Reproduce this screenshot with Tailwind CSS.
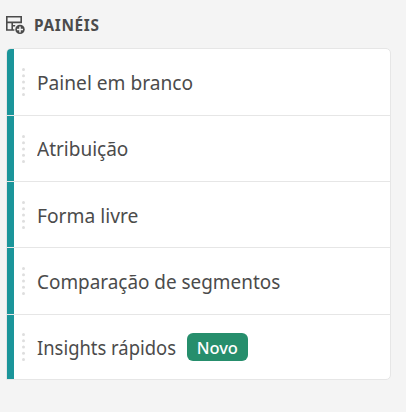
<!DOCTYPE html>
<html lang="pt">
<head>
<meta charset="utf-8">
<title>Painéis</title>
<script src="https://cdn.jsdelivr.net/npm/@tailwindcss/browser@4"></script>
</head>
<body class="h-screen overflow-hidden bg-[#f4f4f4] pl-[6px] font-['Noto_Sans',sans-serif] text-[#4b4b4b]">
<header class="flex h-12 items-center pt-[2px]">
<svg class="h-5 w-5 shrink-0" viewBox="0 0 20 20" fill="none" stroke="#4b4b4b" stroke-width="1.6">
<path d="M15.2 8.2V1.8H.8v13.2h7.6M.8 7.4h14.4M6.2 7.4V15M6.2 10.8h3"/>
<circle cx="14" cy="14.4" r="4.7" fill="#4b4b4b" stroke="none"/>
<path d="M14 11.4v6M11 14.4h6" stroke="#f4f4f4" stroke-width="1.5"/>
</svg>
<h1 class="ml-2 origin-left scale-x-[.96] text-[16px] leading-6 font-bold tracking-[.7px] whitespace-nowrap">PAINÉIS</h1>
</header>
<ul class="grid h-[332px] w-[385px] grid-rows-[67px_66px_66px_67px_1fr] overflow-hidden rounded-[5px] rounded-bl-none border border-[#e6e6e6] bg-white text-[20px] whitespace-nowrap">
<li class="flex items-center border-b border-[#e6e6e6]"><i class="h-full w-[7px] bg-[#1b959a]"></i><svg class="mx-2 h-7 w-[3px]" fill="#dedede"><circle cx="1.5" cy="1.5" r="1.5"/><circle cx="1.5" cy="7.7" r="1.5"/><circle cx="1.5" cy="14" r="1.5"/><circle cx="1.5" cy="20.2" r="1.5"/><circle cx="1.5" cy="26.5" r="1.5"/></svg><span class="ml-[4px] origin-left scale-x-[.957] pt-[2px]">Painel em branco</span></li>
<li class="flex items-center border-b border-[#e6e6e6]"><i class="h-full w-[7px] bg-[#1b959a]"></i><svg class="mx-2 h-7 w-[3px]" fill="#dedede"><circle cx="1.5" cy="1.5" r="1.5"/><circle cx="1.5" cy="7.7" r="1.5"/><circle cx="1.5" cy="14" r="1.5"/><circle cx="1.5" cy="20.2" r="1.5"/><circle cx="1.5" cy="26.5" r="1.5"/></svg><span class="ml-[4px] origin-left scale-x-[.95]">Atribuição</span></li>
<li class="flex items-center border-b border-[#e6e6e6]"><i class="h-full w-[7px] bg-[#1b959a]"></i><svg class="mx-2 h-7 w-[3px]" fill="#dedede"><circle cx="1.5" cy="1.5" r="1.5"/><circle cx="1.5" cy="7.7" r="1.5"/><circle cx="1.5" cy="14" r="1.5"/><circle cx="1.5" cy="20.2" r="1.5"/><circle cx="1.5" cy="26.5" r="1.5"/></svg><span class="ml-[4px] origin-left scale-x-[.96] pt-[2px]">Forma livre</span></li>
<li class="flex items-center border-b border-[#e6e6e6]"><i class="h-full w-[7px] bg-[#1b959a]"></i><svg class="mx-2 h-7 w-[3px]" fill="#dedede"><circle cx="1.5" cy="1.5" r="1.5"/><circle cx="1.5" cy="7.7" r="1.5"/><circle cx="1.5" cy="14" r="1.5"/><circle cx="1.5" cy="20.2" r="1.5"/><circle cx="1.5" cy="26.5" r="1.5"/></svg><span class="ml-[4px] origin-left scale-x-[.945] pt-[2px]">Comparação de segmentos</span></li>
<li class="flex items-center"><i class="h-full w-[7px] bg-[#1b959a]"></i><svg class="mx-2 h-7 w-[3px]" fill="#dedede"><circle cx="1.5" cy="1.5" r="1.5"/><circle cx="1.5" cy="7.7" r="1.5"/><circle cx="1.5" cy="14" r="1.5"/><circle cx="1.5" cy="20.2" r="1.5"/><circle cx="1.5" cy="26.5" r="1.5"/></svg><span class="ml-[4px] w-[150px] pt-[2px]"><span class="inline-block origin-left scale-x-[.92]">Insights rápidos</span></span><b class="flex h-7 w-[61px] items-center justify-center rounded-md bg-[#268e6c] pt-px text-[17px] font-medium text-white"><span class="scale-x-[.97]">Novo</span></b></li>
</ul>
</body>
</html>
